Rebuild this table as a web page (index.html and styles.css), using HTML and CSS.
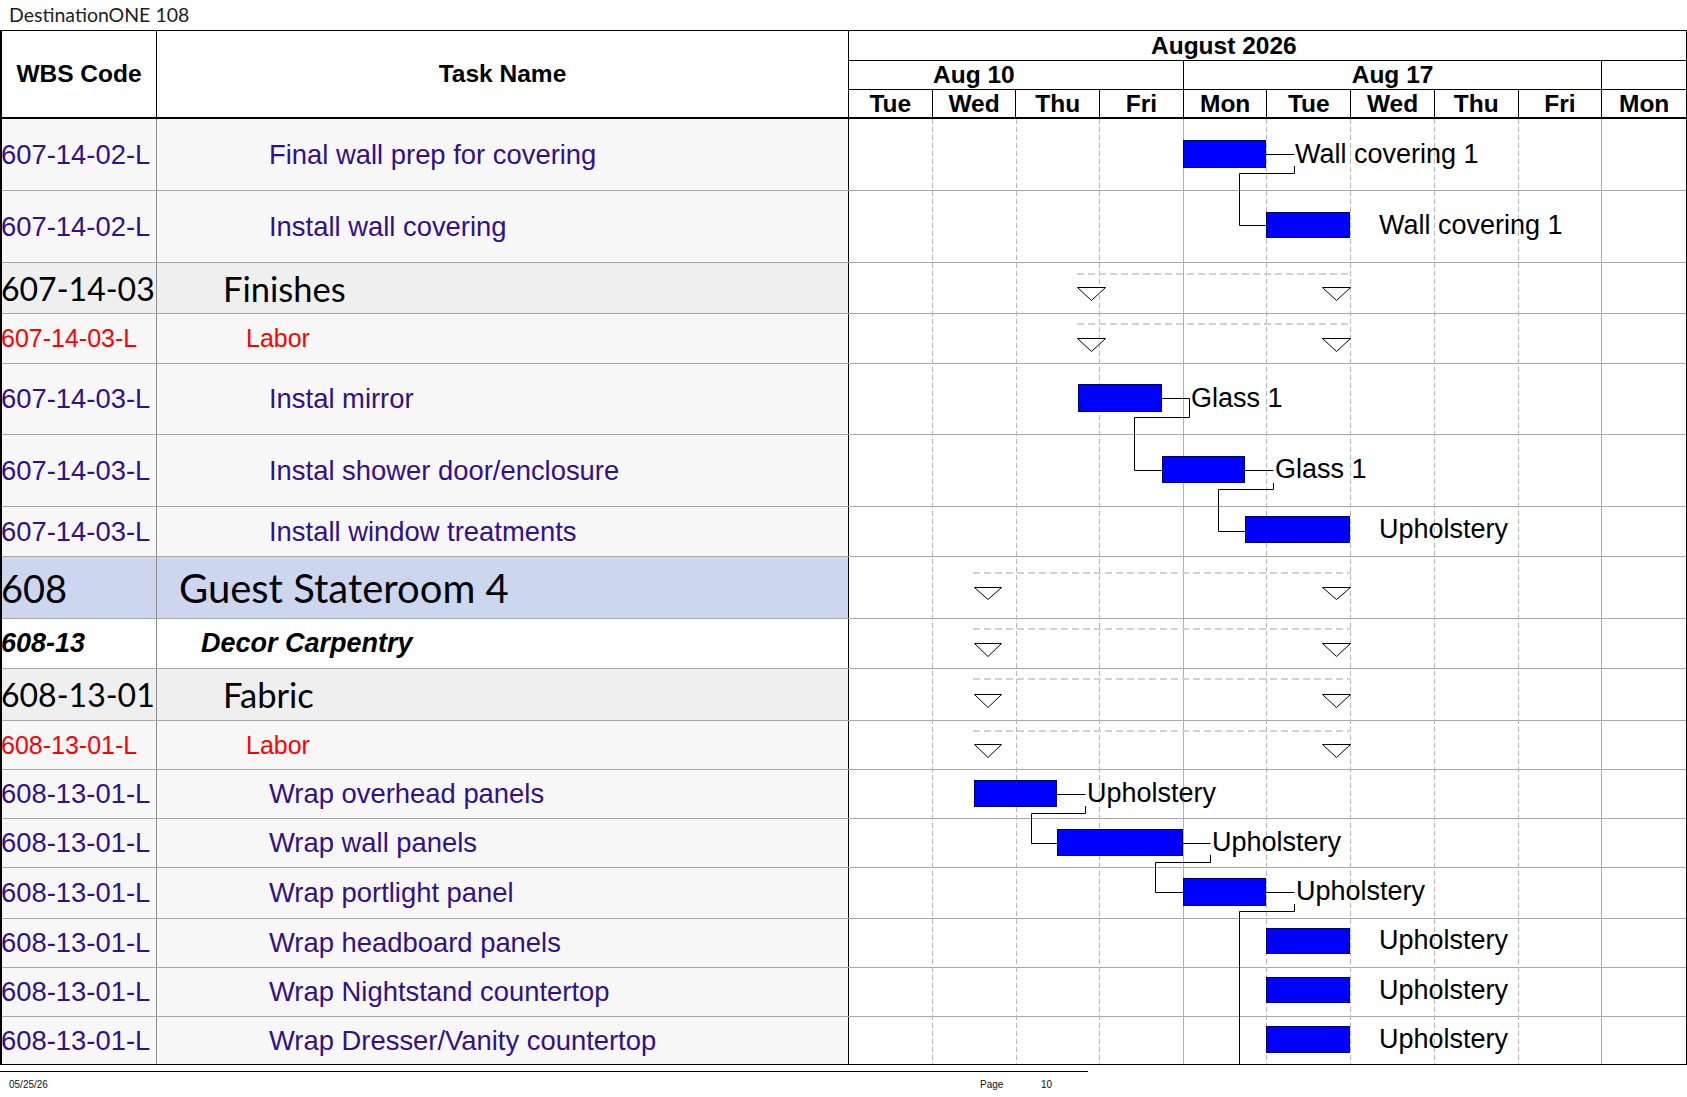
FILE: index.html
```html
<!DOCTYPE html>
<html lang="en">
<head>
<meta charset="utf-8">
<title>DestinationONE 108</title>
<link rel="stylesheet" href="styles.css">
</head>
<body>
<div class="title">DestinationONE 108</div>
<div class="chart">
  <div class="head">
    <div class="hcell wbs-h">WBS Code</div>
    <div class="hcell task-h">Task Name</div>
    <div class="timescale">
      <div class="month">August 2026</div>
      <div class="weeks">
        <div class="week first">Aug 10</div>
        <div class="week">Aug 17</div>
        <div class="week last"></div>
      </div>
      <div class="days">
        <div class="day">Tue</div><div class="day">Wed</div><div class="day">Thu</div><div class="day">Fri</div><div class="day">Mon</div>
        <div class="day">Tue</div><div class="day">Wed</div><div class="day">Thu</div><div class="day">Fri</div><div class="day">Mon</div>
      </div>
    </div>
  </div>
  <div class="body">
    <div class="row task h72"><div class="wbs">607-14-02-L</div><div class="name l5">Final wall prep for covering</div><div class="gcell"></div></div>
    <div class="row task h72"><div class="wbs">607-14-02-L</div><div class="name l5">Install wall covering</div><div class="gcell"></div></div>
    <div class="row group h51"><div class="wbs">607-14-03</div><div class="name l3">Finishes</div><div class="gcell"></div></div>
    <div class="row labor h50"><div class="wbs">607-14-03-L</div><div class="name l4">Labor</div><div class="gcell"></div></div>
    <div class="row task h71"><div class="wbs">607-14-03-L</div><div class="name l5">Instal mirror</div><div class="gcell"></div></div>
    <div class="row task h72"><div class="wbs">607-14-03-L</div><div class="name l5">Instal shower door/enclosure</div><div class="gcell"></div></div>
    <div class="row task h50"><div class="wbs">607-14-03-L</div><div class="name l5">Install window treatments</div><div class="gcell"></div></div>
    <div class="row room h62"><div class="wbs">608</div><div class="name l1">Guest Stateroom 4</div><div class="gcell"></div></div>
    <div class="row section h50"><div class="wbs">608-13</div><div class="name l2">Decor Carpentry</div><div class="gcell"></div></div>
    <div class="row group h52"><div class="wbs">608-13-01</div><div class="name l3">Fabric</div><div class="gcell"></div></div>
    <div class="row labor h49"><div class="wbs">608-13-01-L</div><div class="name l4">Labor</div><div class="gcell"></div></div>
    <div class="row task h49"><div class="wbs">608-13-01-L</div><div class="name l5">Wrap overhead panels</div><div class="gcell"></div></div>
    <div class="row task h49"><div class="wbs">608-13-01-L</div><div class="name l5">Wrap wall panels</div><div class="gcell"></div></div>
    <div class="row task h51"><div class="wbs">608-13-01-L</div><div class="name l5">Wrap portlight panel</div><div class="gcell"></div></div>
    <div class="row task h49"><div class="wbs">608-13-01-L</div><div class="name l5">Wrap headboard panels</div><div class="gcell"></div></div>
    <div class="row task h49"><div class="wbs">608-13-01-L</div><div class="name l5">Wrap Nightstand countertop</div><div class="gcell"></div></div>
    <div class="row task h47 end"><div class="wbs">608-13-01-L</div><div class="name l5">Wrap Dresser/Vanity countertop</div><div class="gcell"></div></div>

    <svg class="gantt" width="837" height="945" viewBox="849 119 837 945" xmlns="http://www.w3.org/2000/svg">
      <g class="dayline">
        <line x1="932.5" y1="119" x2="932.5" y2="1064"/>
        <line x1="1016.5" y1="119" x2="1016.5" y2="1064"/>
        <line x1="1099.5" y1="119" x2="1099.5" y2="1064"/>
        <line x1="1266.5" y1="119" x2="1266.5" y2="1064"/>
        <line x1="1350.5" y1="119" x2="1350.5" y2="1064"/>
        <line x1="1434.5" y1="119" x2="1434.5" y2="1064"/>
        <line x1="1518.5" y1="119" x2="1518.5" y2="1064"/>
      </g>
      <g class="weekline">
        <line x1="1183.5" y1="119" x2="1183.5" y2="1064"/>
        <line x1="1601.5" y1="119" x2="1601.5" y2="1064"/>
      </g>
      <g class="sumline">
        <line x1="1077" y1="274" x2="1351" y2="274"/>
        <line x1="1077" y1="324" x2="1351" y2="324"/>
        <line x1="973" y1="573" x2="1351" y2="573"/>
        <line x1="973" y1="629" x2="1351" y2="629"/>
        <line x1="973" y1="679" x2="1351" y2="679"/>
        <line x1="973" y1="731" x2="1351" y2="731"/>
      </g>
      <g class="tri">
        <polygon points="1077.5,287.5 1105.5,287.5 1091.5,300.5"/>
        <polygon points="1322.5,287.5 1350.5,287.5 1336.5,300.5"/>
        <polygon points="1077.5,338.5 1105.5,338.5 1091.5,351.5"/>
        <polygon points="1322.5,338.5 1350.5,338.5 1336.5,351.5"/>
        <polygon points="974.5,587.5 1001.5,587.5 988,599.5"/>
        <polygon points="1322.5,587.5 1350.5,587.5 1336.5,599.5"/>
        <polygon points="974.5,643.5 1001.5,643.5 988,656.5"/>
        <polygon points="1322.5,643.5 1350.5,643.5 1336.5,656.5"/>
        <polygon points="974.5,694.5 1001.5,694.5 988,707.5"/>
        <polygon points="1322.5,694.5 1350.5,694.5 1336.5,707.5"/>
        <polygon points="974.5,744.5 1001.5,744.5 988,757.5"/>
        <polygon points="1322.5,744.5 1350.5,744.5 1336.5,757.5"/>
      </g>
      <g class="link">
        <path d="M1266 154.5 H1294.5"/>
        <path d="M1294.5 166 V173.5 H1239.5 V225.5 H1266"/>
        <path d="M1162 398.5 H1189.5 V417.5 H1134.5 V470.5 H1162"/>
        <path d="M1245 470.5 H1273.5"/>
        <path d="M1273.5 483 V489.5 H1218.5 V531.5 H1245"/>
        <path d="M1057 794.5 H1085.5"/>
        <path d="M1085.5 806 V813.5 H1031.5 V843.5 H1057"/>
        <path d="M1183 843.5 H1210.5"/>
        <path d="M1210.5 855 V862.5 H1155.5 V892.5 H1183"/>
        <path d="M1266 892.5 H1294.5"/>
        <path d="M1294.5 904 V911.5 H1239.5 V1064"/>
      </g>
      <g class="bar">
        <rect x="1183.5" y="140.5" width="82" height="27"/>
        <rect x="1266.5" y="212.5" width="83" height="25"/>
        <rect x="1078.5" y="384.5" width="83" height="27"/>
        <rect x="1162.5" y="456.5" width="82" height="26"/>
        <rect x="1245.5" y="516.5" width="104" height="26"/>
        <rect x="974.5" y="780.5" width="82" height="26"/>
        <rect x="1057.5" y="829.5" width="125" height="26"/>
        <rect x="1183.5" y="878.5" width="82" height="27"/>
        <rect x="1266.5" y="928.5" width="83" height="25"/>
        <rect x="1266.5" y="977.5" width="83" height="25"/>
        <rect x="1266.5" y="1026.5" width="83" height="26"/>
      </g>
      <g class="label">
        <text x="1295" y="163">Wall covering 1</text>
        <text x="1379" y="234">Wall covering 1</text>
        <text x="1191" y="407">Glass 1</text>
        <text x="1275" y="478">Glass 1</text>
        <text x="1379" y="538">Upholstery</text>
        <text x="1087" y="802">Upholstery</text>
        <text x="1212" y="851">Upholstery</text>
        <text x="1296" y="900">Upholstery</text>
        <text x="1379" y="949">Upholstery</text>
        <text x="1379" y="999">Upholstery</text>
        <text x="1379" y="1048">Upholstery</text>
      </g>
    </svg>
  </div>
</div>
<div class="footer">
  <span>05/25/26</span>
  <span>Page</span>
  <span>10</span>
</div>
</body>
</html>
```
FILE: styles.css
```css
body {
  margin: 0;
  background: #fff;
  color: #000;
  font-family: "Liberation Sans", Arial, sans-serif;
}

.title {
  height: 30px;
  box-sizing: border-box;
  padding: 4px 0 0 9px;
  font-family: Lato, "Open Sans", sans-serif;
  font-size: 19.5px;
  line-height: 22px;
  color: #1e1e1e;
}

.chart {
  width: 1687px;
  box-sizing: border-box;
  border: 1px solid #000;
  border-left-width: 2px;
}

/* ---------- header ---------- */
.head {
  display: grid;
  grid-template-columns: 155px 692px 837px;
  height: 88px;
  box-sizing: border-box;
  border-bottom: 2px solid #000;
}

.hcell {
  display: flex;
  align-items: center;
  justify-content: center;
  font-weight: bold;
  font-size: 24.5px;
  border-right: 1px solid #000;
}

.timescale {
  display: flex;
  flex-direction: column;
}

.month {
  height: 30px;
  box-sizing: border-box;
  border-bottom: 1px solid #000;
  padding-left: 302px;
  font-weight: bold;
  font-size: 24.5px;
  line-height: 29px;
}

.weeks {
  height: 29px;
  box-sizing: border-box;
  border-bottom: 1px solid #000;
  display: grid;
  grid-template-columns: 4fr 5fr 1fr;
}

.week {
  text-align: center;
  font-weight: bold;
  font-size: 24.5px;
  line-height: 28px;
  border-right: 1px solid #000;
}

.week.first { padding-right: 84px; }
.week.last { border-right: none; }

.days {
  height: 27px;
  display: grid;
  grid-template-columns: repeat(10, 1fr);
}

.day {
  text-align: center;
  font-weight: bold;
  font-size: 24.5px;
  line-height: 27px;
  border-right: 1px solid #000;
}

.day:last-child { border-right: none; }

/* ---------- body ---------- */
.body {
  position: relative;
}

.row {
  display: grid;
  grid-template-columns: 155px 692px 837px;
  box-sizing: border-box;
  border-bottom: 1px solid #a8a8a8;
  font-size: 27.4px;
}

.row.end { border-bottom: none; }

.h72 { height: 72px; }
.h71 { height: 71px; }
.h62 { height: 62px; }
.h52 { height: 52px; }
.h51 { height: 51px; }
.h50 { height: 50px; }
.h49 { height: 49px; }
.h47 { height: 47px; }

.wbs {
  display: flex;
  align-items: center;
  white-space: nowrap;
  text-indent: -1px;
  border-right: 1px solid #8c8c8c;
}

.name {
  display: flex;
  align-items: center;
  white-space: nowrap;
  border-right: 1px solid #000;
}

.l1 { padding-left: 22px; }
.l2 { padding-left: 44px; }
.l3 { padding-left: 66px; }
.l4 { padding-left: 89px; }
.l5 { padding-left: 112px; }

.gcell { background: #fff; }

.task {
  background: #f7f7f7;
  color: #33108a;
}

.labor {
  background: #f7f7f7;
  color: #f00;
  font-size: 25px;
}

.group {
  background: #efefef;
  font-family: Lato, "Open Sans", sans-serif;
  font-size: 34.5px;
}

.group .wbs {
  font-size: 32px;
}

.room {
  background: #cdd6ef;
  font-family: Lato, "Open Sans", sans-serif;
  font-size: 40px;
}

.room .wbs {
  font-size: 38px;
}

.section {
  background: #fff;
  font-weight: bold;
  font-style: italic;
  font-size: 27px;
}

/* ---------- gantt drawing ---------- */
.gantt {
  position: absolute;
  top: 0;
  left: 847px;
  pointer-events: none;
}

.dayline line {
  stroke: #b4b4b4;
  stroke-width: 1;
  stroke-dasharray: 5 3;
}

.weekline line {
  stroke: #b0b0b0;
  stroke-width: 1;
}

.sumline line {
  stroke: #d2d2d2;
  stroke-width: 2;
  stroke-dasharray: 7 4;
}

.tri polygon {
  fill: #fff;
  stroke: #000;
  stroke-width: 1;
}

.link path {
  fill: none;
  stroke: #000;
  stroke-width: 1;
}

.bar rect {
  fill: #0000ff;
  stroke: #00006e;
  stroke-width: 1;
}

.label text {
  font-family: "Liberation Sans", Arial, sans-serif;
  font-size: 27px;
  fill: #000;
}

/* ---------- footer ---------- */
.footer {
  width: 1088px;
  box-sizing: border-box;
  margin-top: 6px;
  border-top: 1px solid #000;
  padding: 7px 0 0 9px;
  display: grid;
  grid-template-columns: 971px 61px auto;
  font-size: 10px;
  line-height: 12px;
  color: #111;
}
```
